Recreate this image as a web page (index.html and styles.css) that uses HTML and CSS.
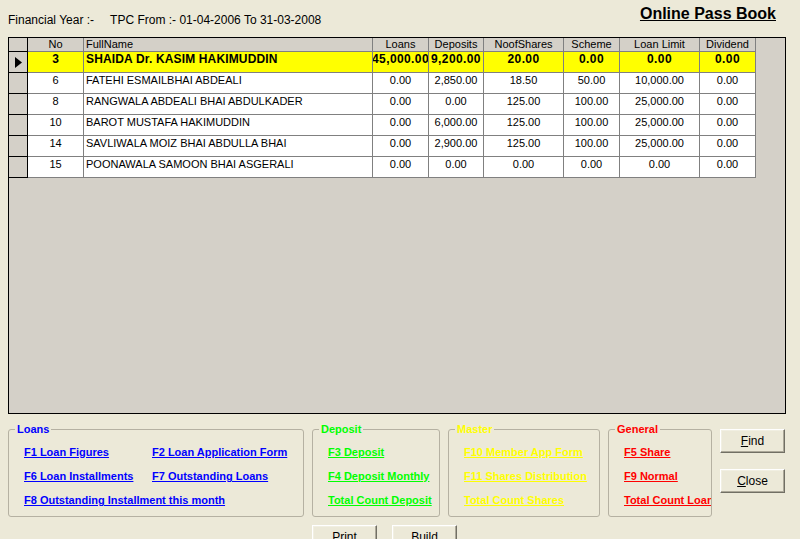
FILE: index.html
```html
<!DOCTYPE html>
<html>
<head>
<meta charset="utf-8">
<title>Online Pass Book</title>
<link rel="stylesheet" href="styles.css">
</head>
<body>
<div class="window">
  <header class="topbar">
    <div class="period">
      <span>Financial Year :-</span>
      <span>TPC From :- 01-04-2006 To 31-03-2008</span>
    </div>
    <h1 class="title">Online Pass Book</h1>
  </header>

  <div class="grid-panel">
    <div class="grid">
      <div class="row head">
        <div class="cell sel"></div>
        <div class="cell">No</div>
        <div class="cell name">FullName</div>
        <div class="cell">Loans</div>
        <div class="cell">Deposits</div>
        <div class="cell">NoofShares</div>
        <div class="cell">Scheme</div>
        <div class="cell">Loan Limit</div>
        <div class="cell">Dividend</div>
      </div>
      <div class="row current">
        <div class="cell sel"><svg class="arrow" width="7" height="11" viewBox="0 0 7 11"><path d="M0 0 L7 5.5 L0 11 Z" fill="#000"/></svg></div>
        <div class="cell">3</div>
        <div class="cell name">SHAIDA Dr. KASIM HAKIMUDDIN</div>
        <div class="cell num">45,000.00</div>
        <div class="cell num">9,200.00</div>
        <div class="cell num">20.00</div>
        <div class="cell num">0.00</div>
        <div class="cell num">0.00</div>
        <div class="cell num">0.00</div>
      </div>
      <div class="row">
        <div class="cell sel"></div>
        <div class="cell">6</div>
        <div class="cell name">FATEHI ESMAILBHAI ABDEALI</div>
        <div class="cell">0.00</div>
        <div class="cell">2,850.00</div>
        <div class="cell">18.50</div>
        <div class="cell">50.00</div>
        <div class="cell">10,000.00</div>
        <div class="cell">0.00</div>
      </div>
      <div class="row">
        <div class="cell sel"></div>
        <div class="cell">8</div>
        <div class="cell name">RANGWALA ABDEALI BHAI ABDULKADER</div>
        <div class="cell">0.00</div>
        <div class="cell">0.00</div>
        <div class="cell">125.00</div>
        <div class="cell">100.00</div>
        <div class="cell">25,000.00</div>
        <div class="cell">0.00</div>
      </div>
      <div class="row">
        <div class="cell sel"></div>
        <div class="cell">10</div>
        <div class="cell name">BAROT MUSTAFA HAKIMUDDIN</div>
        <div class="cell">0.00</div>
        <div class="cell">6,000.00</div>
        <div class="cell">125.00</div>
        <div class="cell">100.00</div>
        <div class="cell">25,000.00</div>
        <div class="cell">0.00</div>
      </div>
      <div class="row">
        <div class="cell sel"></div>
        <div class="cell">14</div>
        <div class="cell name">SAVLIWALA MOIZ BHAI ABDULLA BHAI</div>
        <div class="cell">0.00</div>
        <div class="cell">2,900.00</div>
        <div class="cell">125.00</div>
        <div class="cell">100.00</div>
        <div class="cell">25,000.00</div>
        <div class="cell">0.00</div>
      </div>
      <div class="row">
        <div class="cell sel"></div>
        <div class="cell">15</div>
        <div class="cell name">POONAWALA SAMOON BHAI ASGERALI</div>
        <div class="cell">0.00</div>
        <div class="cell">0.00</div>
        <div class="cell">0.00</div>
        <div class="cell">0.00</div>
        <div class="cell">0.00</div>
        <div class="cell">0.00</div>
      </div>
    </div>
  </div>

  <div class="bottom">
    <fieldset class="group loans">
      <legend>Loans</legend>
      <div class="links two-col">
        <a href="#">F1 Loan Figures</a>
        <a href="#">F2 Loan Application Form</a>
        <a href="#">F6 Loan Installments</a>
        <a href="#">F7 Outstanding Loans</a>
        <a href="#" class="span">F8 Outstanding Installment this month</a>
      </div>
    </fieldset>
    <fieldset class="group deposit">
      <legend>Deposit</legend>
      <div class="links">
        <a href="#">F3 Deposit</a>
        <a href="#">F4 Deposit Monthly</a>
        <a href="#">Total Count Deposit</a>
      </div>
    </fieldset>
    <fieldset class="group master">
      <legend>Master</legend>
      <div class="links">
        <a href="#">F10 Member App Form</a>
        <a href="#">F11 Shares Distribution</a>
        <a href="#">Total Count Shares</a>
      </div>
    </fieldset>
    <fieldset class="group general">
      <legend>General</legend>
      <div class="links">
        <a href="#">F5 Share</a>
        <a href="#">F9 Normal</a>
        <a href="#">Total Count Loan</a>
      </div>
    </fieldset>
    <div class="side">
      <button class="btn"><u>F</u>ind</button>
      <button class="btn"><u>C</u>lose</button>
    </div>
  </div>

  <div class="actions">
    <button class="btn">Print</button>
    <button class="btn">Build</button>
  </div>
</div>
</body>
</html>
```

FILE: styles.css
```css
html, body {
  margin: 0;
  padding: 0;
}

body {
  background: #ECE9D8;
  font-family: "Liberation Sans", Arial, sans-serif;
  font-size: 11px;
  color: #000;
}

.window {
  width: 800px;
  height: 539px;
  overflow: hidden;
}

/* ---------- top bar ---------- */
.topbar {
  display: flex;
  justify-content: space-between;
  align-items: flex-start;
  height: 37px;
  box-sizing: border-box;
  padding: 0 24px 0 8px;
}

.period {
  display: flex;
  gap: 16px;
  margin-top: 13px;
  font-size: 12px;
  line-height: 14px;
}

.title {
  margin: 5px 0 0;
  font-size: 16px;
  line-height: 18px;
  font-weight: bold;
  text-decoration: underline;
}

/* ---------- data grid ---------- */
.grid-panel {
  margin-left: 8px;
  width: 778px;
  height: 377px;
  box-sizing: border-box;
  border: 1px solid #000;
  background: #D4D0C8;
}

.grid {
  display: grid;
  grid-template-columns: 19px 56px 289px 56px 55px 80px 56px 80px 56px;
  grid-template-rows: 14px;
  grid-auto-rows: 21px;
  width: 747px;
}

.row {
  display: contents;
}

.cell {
  box-sizing: border-box;
  display: flex;
  justify-content: center;
  align-items: flex-start;
  overflow: hidden;
  white-space: nowrap;
  background: #fff;
  border-right: 1px solid #808080;
  border-bottom: 1px solid #808080;
  line-height: 13px;
  padding-top: 1px;
}

.cell.name {
  justify-content: flex-start;
  padding-left: 2px;
}

.head .cell {
  background: #D4D0C8;
  padding-top: 0;
}

.cell.sel {
  background: #D4D0C8;
  border-right-color: #000;
  border-bottom-color: #000;
  padding: 0 0 0 6px;
  justify-content: flex-start;
  align-items: center;
}

.current .cell {
  background: #FFFF00;
  font-weight: bold;
  font-size: 12px;
  line-height: 14px;
  padding-top: 0;
}

.current .cell.name {
  letter-spacing: 0.15px;
}

.current .cell.num {
  letter-spacing: 0.4px;
}

.current .cell.sel {
  background: #D4D0C8;
  padding-top: 0;
}

.arrow {
  display: block;
}

/* ---------- groups ---------- */
.bottom {
  display: flex;
  align-items: flex-start;
  gap: 8px;
  padding-left: 8px;
  margin-top: 9px;
}

.group {
  margin: 0;
  padding: 0;
  min-width: 0;
  box-sizing: border-box;
  border: 1px solid #B5B1A2;
  border-radius: 3px;
}

.group legend {
  margin-left: 6px;
  padding: 0 2px;
  font-weight: bold;
  font-size: 11px;
  line-height: 13px;
}

.links {
  display: grid;
  row-gap: 11px;
  justify-items: start;
  padding: 10px 0 9px 15px;
  overflow: hidden;
}

.links.two-col {
  grid-template-columns: 128px auto;
}

.links .span {
  grid-column: 1 / span 2;
}

.links a {
  font-weight: bold;
  line-height: 13px;
  text-decoration: underline;
  white-space: nowrap;
}

.loans { width: 296px; }
.deposit { width: 128px; }
.master { width: 152px; }
.general { width: 104px; }

.loans legend, .loans a { color: #0000FF; }
.deposit legend, .deposit a { color: #00FF00; }
.master legend, .master a { color: #FFFF00; }
.general legend, .general a { color: #FF0000; }

/* ---------- buttons ---------- */
.side {
  display: flex;
  flex-direction: column;
  gap: 16px;
  padding-top: 6px;
}

.btn {
  width: 65px;
  height: 24px;
  box-sizing: border-box;
  margin: 0;
  padding: 0;
  background: #ECE9D8;
  border: 1px solid;
  border-color: #FFFFFF #716F64 #716F64 #FFFFFF;
  box-shadow: inset -1px -1px 0 #ACA899, inset 1px 1px 0 #F1EFE2;
  font-family: "Liberation Sans", Arial, sans-serif;
  font-size: 12px;
  line-height: 14px;
  color: #000;
}

.actions {
  display: flex;
  gap: 15px;
  padding-left: 312px;
  margin-top: 8px;
}
```
